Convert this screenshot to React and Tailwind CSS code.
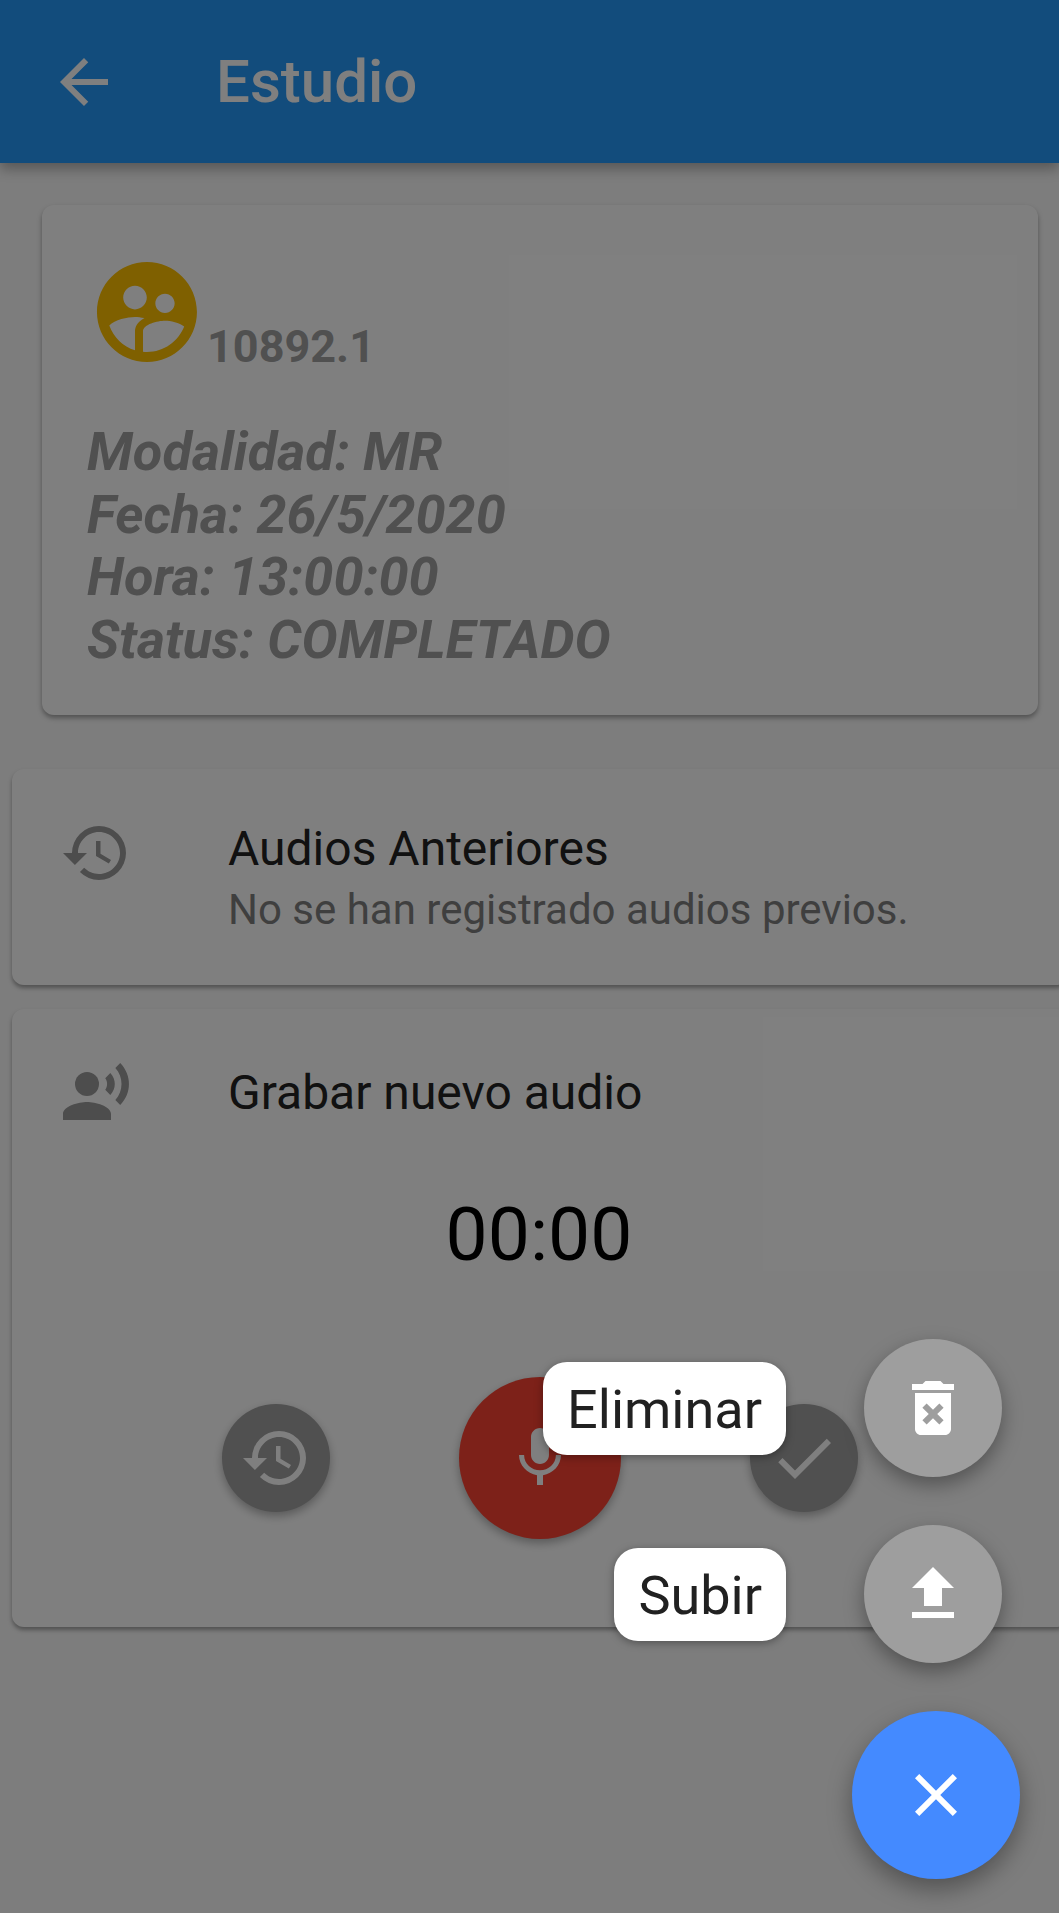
import React from 'react';
import {
    MdArrowBack,
    MdCheck,
    MdClose,
    MdDeleteForever,
    MdFileUpload,
    MdHistory,
    MdMic,
    MdRecordVoiceOver,
    MdSupervisedUserCircle
} from 'react-icons/md';

const ListCard = ({ children, className }) => (
    <div className={`ml-3 w-[1056px] rounded-[12px] bg-white shadow-[0_3px_4px_rgba(0,0,0,0.35)] ${className}`}>
        {children}
    </div>
);

const RoundButton = ({ icon: Icon, size, color }) => (
    <div
        className={`flex items-center justify-center rounded-full text-white shadow-[0_4px_10px_rgba(0,0,0,0.3)] ${size} ${color}`}
    >
        <Icon size={72} />
    </div>
);

const FabAction = ({ label, icon: Icon }) => (
    <div className="mr-[18px] flex items-center gap-[78px]">
        <div className="flex h-[93px] items-center rounded-[24px] bg-white pt-[3px] pr-[24px] pl-[24px] text-[54px] leading-none text-[#212121] shadow-[0_2px_8px_rgba(0,0,0,0.35)]">
            {label}
        </div>
        <div className="flex h-[138px] w-[138px] items-center justify-center rounded-full bg-[#9e9e9e] text-white shadow-[0_8px_20px_rgba(0,0,0,0.35)]">
            <Icon size={72} />
        </div>
    </div>
);

export default function App() {
    return (
        <div className="relative h-[1913px] w-[1059px] overflow-hidden bg-[#fafafa] font-['Roboto',sans-serif]">
            <header className="flex h-[163px] items-center bg-[#2498f8] text-white shadow-[0_6px_12px_rgba(0,0,0,0.3)]">
                <MdArrowBack size={72} className="ml-12" />
                <h1 className="ml-[96px] text-[60px] font-medium leading-none">Estudio</h1>
            </header>

            <section className="mt-[42px] ml-[42px] h-[510px] w-[996px] rounded-[12px] bg-white px-[45px] pt-[47px] shadow-[0_3px_5px_rgba(0,0,0,0.35)]">
                <div className="flex items-end">
                    <MdSupervisedUserCircle size={120} className="text-[#ffc000]" />
                    <span className="mb-[-2px] text-[45px] font-bold leading-[1.17] text-[#a0a0a0]">10892.1</span>
                </div>
                <div className="mt-[49px] text-[54px] font-bold italic leading-[62.5px] text-[#a0a0a0]">
                    <p>Modalidad: MR</p>
                    <p>Fecha: 26/5/2020</p>
                    <p>Hora: 13:00:00</p>
                    <p>Status: COMPLETADO</p>
                </div>
            </section>

            <ListCard className="mt-[54px] flex h-[216px] items-start pt-[48px]">
                <MdHistory size={72} className="ml-[48px] text-[#9a9a9a]" />
                <div className="ml-[96px]">
                    <div className="text-[48px] leading-[63px] text-[#222222]">Audios Anteriores</div>
                    <div className="text-[42px] leading-[60px] text-[#7e7e7e]">No se han registrado audios previos.</div>
                </div>
            </ListCard>

            <ListCard className="mt-6 h-[618px] pt-[48px]">
                <div className="flex items-start">
                    <MdRecordVoiceOver size={72} className="ml-[48px] text-[#9a9a9a]" />
                    <div className="ml-[96px] text-[48px] leading-[72px] text-[#222222]">Grabar nuevo audio</div>
                </div>
                <div className="mt-[63px] pr-[2px] text-center text-[75px] leading-[84px] text-black">00:00</div>
                <div className="mt-[101px] flex items-center justify-center gap-[129px]">
                    <RoundButton icon={MdHistory} size="h-[108px] w-[108px]" color="bg-[#a0a0a0]" />
                    <RoundButton icon={MdMic} size="h-[162px] w-[162px]" color="bg-[#fa4232]" />
                    <RoundButton icon={MdCheck} size="h-[108px] w-[108px]" color="bg-[#a0a0a0]" />
                </div>
            </ListCard>

            {/* dim layer behind the open speed dial */}
            <div className="absolute inset-0 bg-black/50" />

            <div className="absolute right-[39px] bottom-[34px] flex flex-col items-end gap-[48px]">
                <FabAction label="Eliminar" icon={MdDeleteForever} />
                <FabAction label="Subir" icon={MdFileUpload} />
                <div className="flex h-[168px] w-[168px] items-center justify-center rounded-full bg-[#448aff] text-white shadow-[0_10px_24px_rgba(0,0,0,0.35)]">
                    <MdClose size={72} />
                </div>
            </div>
        </div>
    );
}
